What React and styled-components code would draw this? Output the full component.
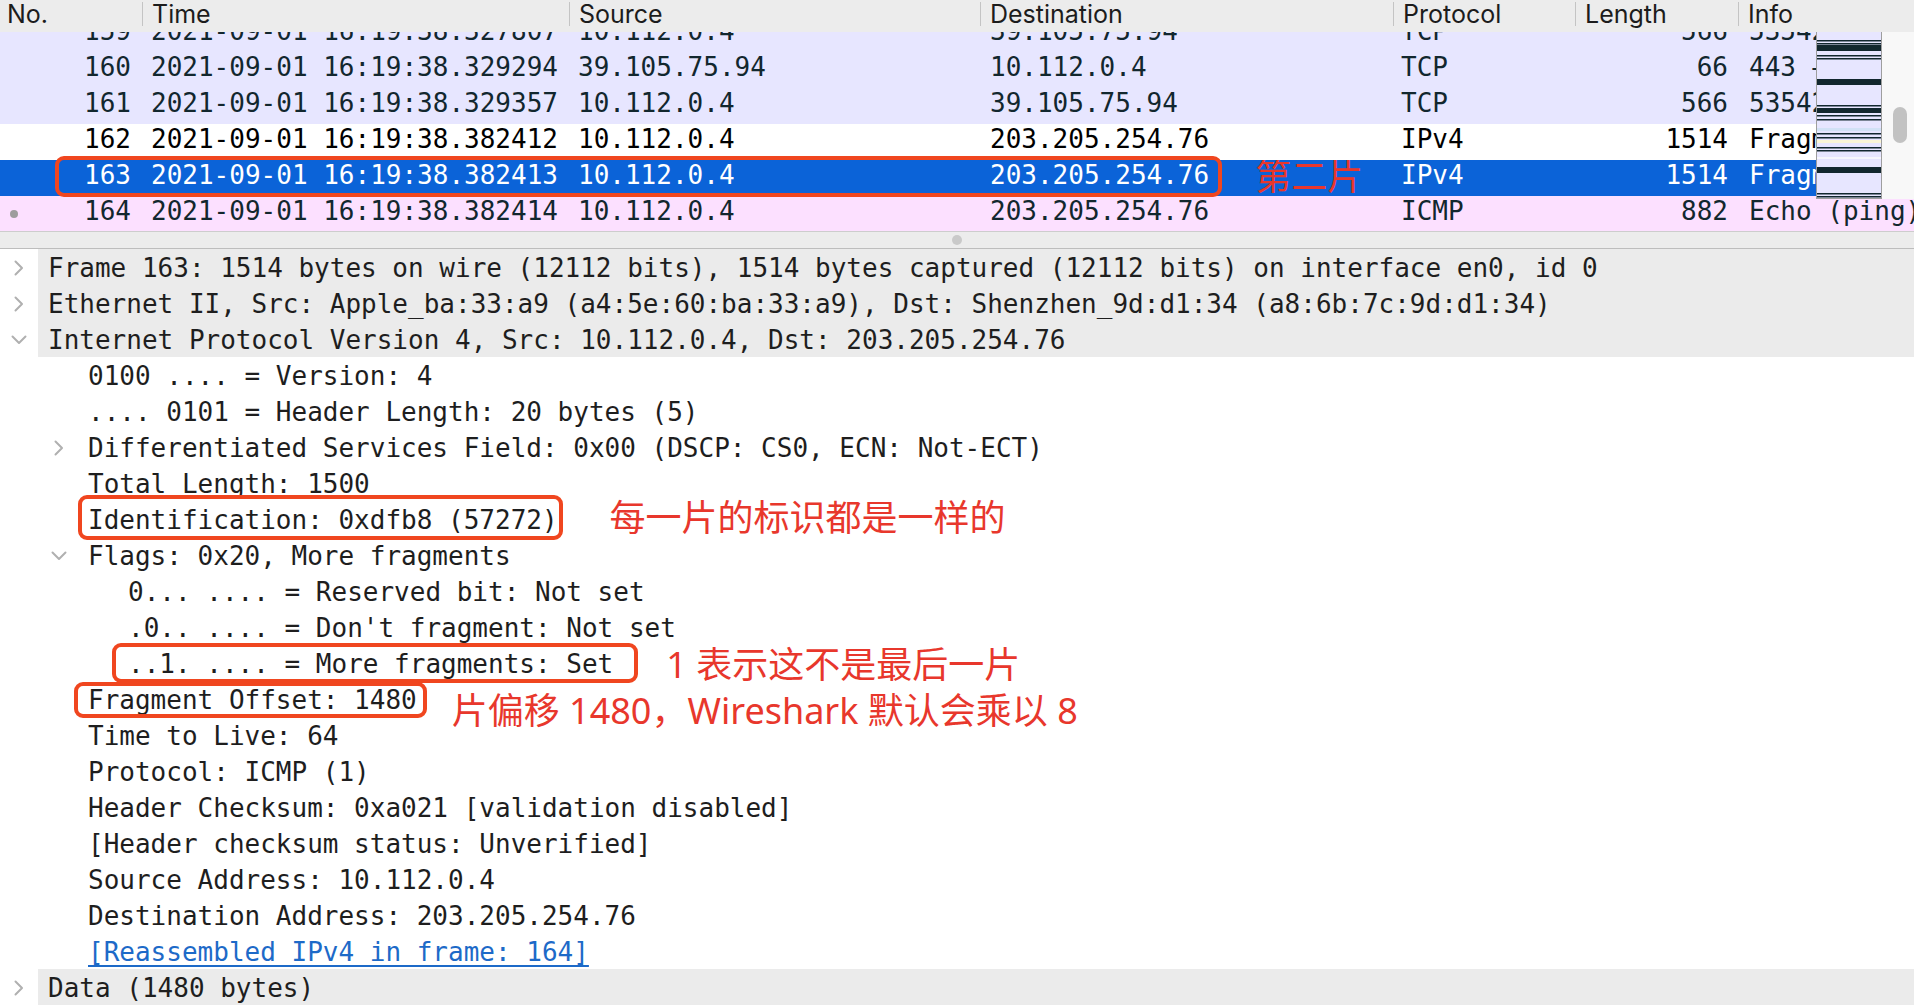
import React from "react";
import styled, { createGlobalStyle, css } from "styled-components";

const GlobalStyle = createGlobalStyle`
  html, body {
    margin: 0;
    padding: 0;
    background: #fff;
  }
  body {
    overflow: hidden;
  }
`;

const MONO = `"DejaVu Sans Mono", "Liberation Mono", monospace`;
const COLUMNS = "142px 427px 411px 413px 182px 163px 1fr";

const palette = {
  tcp: { bg: "#e7e6ff", fg: "#12272e" },
  plain: { bg: "#ffffff", fg: "#000000" },
  selected: { bg: "#0b63d8", fg: "#ffffff" },
  icmp: { bg: "#fce0ff", fg: "#12272e" },
};

const Window = styled.div`
  width: 1914px;
  height: 1006px;
  display: flex;
  flex-direction: column;
  overflow: hidden;
  background: #fff;
  font-family: ${MONO};
`;

const ListHeader = styled.div`
  display: grid;
  grid-template-columns: ${COLUMNS};
  height: 32px;
  flex: none;
  background: #ececec;
  font-family: Inter, "Liberation Sans", sans-serif;
  font-size: 25px;
  line-height: 28px;
  color: #1c1c1c;
`;

const HeaderCell = styled.div`
  display: flex;
  align-items: flex-start;
  gap: 9px;
  padding-left: ${(p) => (p.$first ? 7 : 0)}px;
  white-space: nowrap;
  overflow: hidden;
`;

const HeaderSep = styled.span`
  flex: none;
  width: 1px;
  height: 24px;
  margin-top: 2px;
  background: #c4c4c4;
`;

const Viewport = styled.div`
  position: relative;
  height: 199px;
  flex: none;
  overflow: hidden;
`;

const Rows = styled.div`
  margin-top: -16px;
`;

const Row = styled.div`
  position: relative;
  display: grid;
  grid-template-columns: ${COLUMNS};
  height: 36px;
  font-size: 26px;
  line-height: 30px;
  background: ${(p) => palette[p.$kind].bg};
  color: ${(p) => palette[p.$kind].fg};

  ${(p) =>
    p.$marked &&
    css`
      &::after {
        content: "";
        position: absolute;
        left: 55px;
        width: 1167px;
        top: -4px;
        bottom: -1px;
        box-sizing: border-box;
        border: 4px solid #f0461f;
        border-radius: 9px;
        z-index: 1;
        pointer-events: none;
      }
    `}
`;

const Cell = styled.div`
  display: flex;
  align-items: flex-start;
  justify-content: ${(p) => (p.$right ? "flex-end" : "flex-start")};
  padding-left: ${(p) => (p.$right ? 0 : p.$pad)}px;
  padding-right: ${(p) => (p.$right ? p.$pad : 0)}px;
  white-space: pre;
  overflow: hidden;
`;

const RelatedDot = styled.span`
  flex: none;
  width: 8px;
  height: 8px;
  border-radius: 50%;
  background: #9d9d9d;
  margin: 14px auto 0 10px;
`;

const Note = styled.span`
  flex: none;
  font-family: "Noto Sans", "Noto Sans CJK SC", sans-serif;
  font-size: 36px;
  line-height: 24px;
  color: #e8372c;
  white-space: pre;
  margin-left: ${(p) => p.$gap}px;
  margin-top: ${(p) => p.$dy}px;
`;

const Overview = styled.div`
  position: absolute;
  top: 0;
  right: 32px;
  width: 66px;
  height: 167px;
  box-sizing: border-box;
  border: 1px solid #9e9e9e;
  border-top: none;
  background: #e7e6ff;
  z-index: 2;

  svg {
    display: block;
  }
`;

const ScrollTrack = styled.div`
  position: absolute;
  top: 0;
  right: 0;
  width: 32px;
  height: 167px;
  background: #f8f8f8;
  z-index: 2;
`;

const ScrollThumb = styled.div`
  width: 14px;
  height: 36px;
  margin: 75px 0 0 11px;
  border-radius: 7px;
  background: #c2c2c2;
`;

const Splitter = styled.div`
  height: 16px;
  flex: none;
  background: #ececec;
  border-top: 1px solid #cdcdcd;
  border-bottom: 1px solid #bdbdbd;
  display: flex;
  align-items: center;
  justify-content: center;
`;

const Grip = styled.span`
  width: 10px;
  height: 10px;
  border-radius: 50%;
  background: #c9c9c9;
`;

const Details = styled.div`
  flex: 1;
  font-size: 26px;
  color: #1e1e1e;
`;

const TreeLine = styled.div`
  display: flex;
  height: 36px;
  padding-left: ${(p) => p.$level * 40}px;
`;

const Twisty = styled.span`
  flex: none;
  width: 38px;
  padding-top: 1px;
  display: flex;
  align-items: center;
  justify-content: center;
  color: #b0b0b0;
`;

const LineBody = styled.div`
  flex: 1;
  display: flex;
  align-items: flex-start;
  padding-left: 10px;
  background: ${(p) => (p.$top ? "#ebebeb" : "transparent")};
`;

const LineText = styled.span`
  position: relative;
  line-height: 38px;
  white-space: pre;
  color: ${(p) => (p.$link ? "#1d6ac8" : "inherit")};
  text-decoration: ${(p) => (p.$link ? "underline" : "none")};
  text-underline-offset: 4px;

  ${(p) =>
    p.$box &&
    css`
      &::after {
        content: "";
        position: absolute;
        top: ${p.$box[0]}px;
        right: ${p.$box[1]}px;
        bottom: ${p.$box[2]}px;
        left: ${p.$box[3]}px;
        box-sizing: border-box;
        border: 4px solid #f0461f;
        border-radius: 9px;
        pointer-events: none;
      }
    `}
`;

const Chevron = ({ open }) =>
  open ? (
    <svg width="16" height="10" viewBox="0 0 16 10">
      <polyline
        points="1.5,1.5 8,8 14.5,1.5"
        fill="none"
        stroke="currentColor"
        strokeWidth="2"
        strokeLinecap="round"
        strokeLinejoin="round"
      />
    </svg>
  ) : (
    <svg width="10" height="16" viewBox="0 0 10 16">
      <polyline
        points="1.5,1.5 8,8 1.5,14.5"
        fill="none"
        stroke="currentColor"
        strokeWidth="2"
        strokeLinecap="round"
        strokeLinejoin="round"
      />
    </svg>
  );

const columns = [
  { title: "No." },
  { title: "Time" },
  { title: "Source" },
  { title: "Destination" },
  { title: "Protocol" },
  { title: "Length" },
  { title: "Info" },
];

const packets = [
  {
    no: 159,
    time: "2021-09-01 16:19:38.327807",
    src: "10.112.0.4",
    dst: "39.105.75.94",
    proto: "TCP",
    len: 566,
    info: "53542 → 443 [PSH, ACK] Seq=1 Ack=1 Win=2048 Len=500",
    kind: "tcp",
  },
  {
    no: 160,
    time: "2021-09-01 16:19:38.329294",
    src: "39.105.75.94",
    dst: "10.112.0.4",
    proto: "TCP",
    len: 66,
    info: "443 → 53542 [ACK] Seq=1 Ack=501 Win=31",
    kind: "tcp",
  },
  {
    no: 161,
    time: "2021-09-01 16:19:38.329357",
    src: "10.112.0.4",
    dst: "39.105.75.94",
    proto: "TCP",
    len: 566,
    info: "53542 → 443 [PSH, ACK] Seq=501 Ack=1 Win=2048 Len=500",
    kind: "tcp",
  },
  {
    no: 162,
    time: "2021-09-01 16:19:38.382412",
    src: "10.112.0.4",
    dst: "203.205.254.76",
    proto: "IPv4",
    len: 1514,
    info: "Fragmented IP protocol (proto=ICMP 1, off=0, ID=dfb8)",
    kind: "plain",
  },
  {
    no: 163,
    time: "2021-09-01 16:19:38.382413",
    src: "10.112.0.4",
    dst: "203.205.254.76",
    proto: "IPv4",
    len: 1514,
    info: "Fragmented IP protocol (proto=ICMP 1, off=1480, ID=dfb8)",
    kind: "selected",
    marked: true,
    note: "第二片",
  },
  {
    no: 164,
    time: "2021-09-01 16:19:38.382414",
    src: "10.112.0.4",
    dst: "203.205.254.76",
    proto: "ICMP",
    len: 882,
    info: "Echo (ping) request  id=0x1c3a, seq=0/0, ttl=64",
    kind: "icmp",
    related: true,
  },
];

// minimap stripes: [y, height, colour]
const DARK = "#12272e";
const stripes = [
  [8, 1.5, DARK],
  [11, 1.5, DARK],
  [13, 6, DARK],
  [23, 1.5, DARK],
  [26, 1.5, DARK],
  [47, 6, DARK],
  [73, 1.5, DARK],
  [76, 5, DARK],
  [83, 1.5, DARK],
  [87, 1.5, DARK],
  [96, 3, "#d2e2f6"],
  [101, 1.5, DARK],
  [105, 1.5, DARK],
  [108, 3, "#faf5d6"],
  [115, 1.5, DARK],
  [118, 1.5, DARK],
  [125, 2, "#f7f7fd"],
  [135, 6, DARK],
  [161, 1.5, DARK],
  [164, 1.5, DARK],
];

const tree = [
  {
    level: 0,
    twisty: "closed",
    text: "Frame 163: 1514 bytes on wire (12112 bits), 1514 bytes captured (12112 bits) on interface en0, id 0",
  },
  {
    level: 0,
    twisty: "closed",
    text: "Ethernet II, Src: Apple_ba:33:a9 (a4:5e:60:ba:33:a9), Dst: Shenzhen_9d:d1:34 (a8:6b:7c:9d:d1:34)",
  },
  {
    level: 0,
    twisty: "open",
    text: "Internet Protocol Version 4, Src: 10.112.0.4, Dst: 203.205.254.76",
  },
  { level: 1, text: "0100 .... = Version: 4" },
  { level: 1, text: ".... 0101 = Header Length: 20 bytes (5)" },
  {
    level: 1,
    twisty: "closed",
    text: "Differentiated Services Field: 0x00 (DSCP: CS0, ECN: Not-ECT)",
  },
  { level: 1, text: "Total Length: 1500" },
  {
    level: 1,
    text: "Identification: 0xdfb8 (57272)",
    box: [-6, -5, -1, -10],
    note: { text: "每一片的标识都是一样的", gap: 52, dy: 5 },
  },
  { level: 1, twisty: "open", text: "Flags: 0x20, More fragments" },
  { level: 2, text: "0... .... = Reserved bit: Not set" },
  { level: 2, text: ".0.. .... = Don't fragment: Not set" },
  {
    level: 2,
    text: "..1. .... = More fragments: Set",
    box: [-2, -25, 0, -16],
    note: { text: "1 表示这不是最后一片", gap: 53, dy: 8 },
  },
  {
    level: 1,
    text: "Fragment Offset: 1480",
    box: [1, -10, 1, -14],
    note: { text: "片偏移 1480，Wireshark 默认会乘以 8", gap: 35, dy: 18 },
  },
  { level: 1, text: "Time to Live: 64" },
  { level: 1, text: "Protocol: ICMP (1)" },
  { level: 1, text: "Header Checksum: 0xa021 [validation disabled]" },
  { level: 1, text: "[Header checksum status: Unverified]" },
  { level: 1, text: "Source Address: 10.112.0.4" },
  { level: 1, text: "Destination Address: 203.205.254.76" },
  { level: 1, text: "[Reassembled IPv4 in frame: 164]", link: true },
  { level: 0, twisty: "closed", text: "Data (1480 bytes)" },
];

const PacketRow = ({ p }) => (
  <Row $kind={p.kind} $marked={p.marked}>
    <Cell $right $pad={11}>
      {p.related && <RelatedDot />}
      {p.no}
    </Cell>
    <Cell $pad={9}>{p.time}</Cell>
    <Cell $pad={9}>{p.src}</Cell>
    <Cell $pad={10}>
      {p.dst}
      {p.note && (
        <Note $gap={46} $dy={5}>
          {p.note}
        </Note>
      )}
    </Cell>
    <Cell $pad={8}>{p.proto}</Cell>
    <Cell $right $pad={10}>
      {p.len}
    </Cell>
    <Cell $pad={11}>{p.info}</Cell>
  </Row>
);

const App = () => (
  <Window>
    <GlobalStyle />
    <ListHeader>
      {columns.map((c, i) => (
        <HeaderCell key={c.title} $first={i === 0}>
          {i > 0 && <HeaderSep />}
          {c.title}
        </HeaderCell>
      ))}
    </ListHeader>

    <Viewport>
      <Rows>
        {packets.map((p) => (
          <PacketRow key={p.no} p={p} />
        ))}
      </Rows>
      <Overview>
        <svg width="64" height="166" viewBox="0 0 64 166">
          {stripes.map(([y, h, c], i) => (
            <rect key={i} x="0" y={y} width="64" height={h} fill={c} />
          ))}
        </svg>
      </Overview>
      <ScrollTrack>
        <ScrollThumb />
      </ScrollTrack>
    </Viewport>

    <Splitter>
      <Grip />
    </Splitter>

    <Details>
      {tree.map((t, i) => (
        <TreeLine key={i} $level={t.level}>
          <Twisty>{t.twisty && <Chevron open={t.twisty === "open"} />}</Twisty>
          <LineBody $top={t.level === 0}>
            <LineText $box={t.box} $link={t.link}>
              {t.text}
            </LineText>
            {t.note && (
              <Note $gap={t.note.gap} $dy={t.note.dy}>
                {t.note.text}
              </Note>
            )}
          </LineBody>
        </TreeLine>
      ))}
    </Details>
  </Window>
);

export default App;
